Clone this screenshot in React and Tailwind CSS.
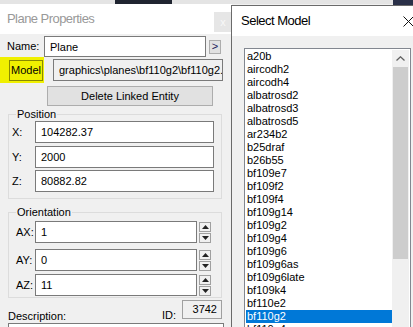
const models = [
  'a20b', 'aircodh2', 'aircodh4', 'albatrosd2', 'albatrosd3', 'albatrosd5', 'ar234b2',
  'b25draf', 'b26b55', 'bf109e7', 'bf109f2', 'bf109f4', 'bf109g14', 'bf109g2', 'bf109g4',
  'bf109g6', 'bf109g6as', 'bf109g6late', 'bf109k4', 'bf110e2', 'bf110g2', 'bf110g4',
]

function Box({ className = '', children }) {
  return (
    <div className={`border border-[#7a7a7a] bg-white pl-[5px] leading-[20px] whitespace-nowrap overflow-hidden ${className}`}>
      {children}
    </div>
  )
}

function Arrow({ down }) {
  return (
    <svg width="7" height="4" viewBox="0 0 7 4">
      <path d={down ? 'M0 0 L7 0 L3.5 4Z' : 'M0 4 L7 4 L3.5 0Z'} fill="#222" />
    </svg>
  )
}

function Spinner() {
  return (
    <div className="ml-[2px] flex flex-col gap-[1px]">
      <div className="w-[12px] h-[10px] border border-[#a0a0a0] bg-[#f0f0f0] flex items-center justify-center">
        <Arrow />
      </div>
      <div className="w-[12px] h-[10px] border border-[#a0a0a0] bg-[#f0f0f0] flex items-center justify-center">
        <Arrow down />
      </div>
    </div>
  )
}

function PlaneProperties() {
  return (
    <div className="w-[232px] flex flex-col">
      {/* title bar */}
      <div className="h-[30px] bg-white flex items-end justify-between">
        <span className="pl-[7px] self-center text-[13px] tracking-[-0.55px] text-[#999999]">Plane Properties</span>
        <div className="w-[18px] h-[20px] mb-[2px] bg-[#e6e6e6] flex items-center justify-center text-[11px] text-[#f8f8f8]">
          x
        </div>
      </div>

      <div className="flex flex-col">
        {/* name */}
        <div className="mt-[2px] h-[21px] flex items-center pl-[7px]">
          <span className="w-[37px]">Name:</span>
          <Box className="w-[162px] h-[21px] leading-[19px]">Plane</Box>
          <div className="ml-[3px] w-[12px] h-[14px] border border-[#adadad] bg-[#e1e1e1] flex items-center justify-center text-[11px] leading-none text-[#1a1a5a]">
            &gt;
          </div>
        </div>

        {/* model */}
        <div className="h-[26px] flex items-center">
          <div className="w-[44px] h-[26px] bg-[#f0f000] flex items-center pl-[9px]">
            <div className="w-[34px] h-[21px] border border-[#8a8a00] pl-[1px] leading-[19px]">Model</div>
          </div>
          <div className="ml-[9px] w-[170px] h-[22px] border border-[#7a7a7a] bg-[#f0f0f0] pl-[5px] leading-[20px] whitespace-nowrap overflow-hidden">
            graphics\planes\bf110g2\bf110g2.x
          </div>
        </div>

        <div className="mt-[3px] ml-[47px] w-[166px] h-[20px] border border-[#adadad] bg-[#e1e1e1] flex items-center justify-center">
          Delete Linked Entity
        </div>

        {/* position */}
        <fieldset className="mt-[2px] mx-[8px] w-[214px] border border-[#dcdcdc] pb-[6px]">
          <legend className="ml-[7px] px-[1px] leading-[13px]">Position</legend>
          <div className="flex items-center pl-[3px] h-[22px]">
            <span className="w-[23px]">X:</span>
            <Box className="w-[179px] h-[22px]">104282.37</Box>
          </div>
          <div className="flex items-center pl-[3px] h-[22px] mt-[3px]">
            <span className="w-[23px]">Y:</span>
            <Box className="w-[179px] h-[22px]">2000</Box>
          </div>
          <div className="flex items-center pl-[3px] h-[22px] mt-[2px]">
            <span className="w-[23px]">Z:</span>
            <Box className="w-[179px] h-[22px]">80882.82</Box>
          </div>
        </fieldset>

        {/* orientation */}
        <fieldset className="mt-[7px] mx-[8px] w-[214px] border border-[#dcdcdc] pb-[1px]">
          <legend className="ml-[7px] px-[1px] leading-[13px]">Orientation</legend>
          <div className="flex items-center pl-[7px] h-[22px] mt-[2px]">
            <span className="w-[19px]">AX:</span>
            <Box className="w-[162px] h-[22px]">1</Box>
            <Spinner />
          </div>
          <div className="flex items-center pl-[7px] h-[22px] mt-[6px]">
            <span className="w-[19px]">AY:</span>
            <Box className="w-[162px] h-[22px]">0</Box>
            <Spinner />
          </div>
          <div className="flex items-center pl-[7px] h-[22px] mt-[3px]">
            <span className="w-[19px]">AZ:</span>
            <Box className="w-[162px] h-[22px]">11</Box>
            <Spinner />
          </div>
        </fieldset>

        {/* description / id */}
        <div className="mt-[2px] h-[23px] flex">
          <span className="pl-[8px] self-end leading-[13px]">Description:</span>
          <span className="ml-auto self-end leading-[13px] mb-[1px]">ID:</span>
          <div className="ml-[6px] mr-[10px] w-[40px] h-[19px] border border-[#a0a0a0] bg-[#f0f0f0] text-right pr-[4px] leading-[17px]">
            3742
          </div>
        </div>
        <div className="mx-[8px] h-[20px] border border-[#7a7a7a] bg-white" />
      </div>
    </div>
  )
}

function SelectModel() {
  return (
    <div className="absolute left-[231px] top-[5px] w-[190px] h-[340px] border-l border-t border-[#6a6a6a] bg-[#f0f0f0]">
      <div className="h-[30px] bg-white flex items-center pl-[9px]">
        <span className="w-[162px] text-[13px] tracking-[-0.5px] text-black">Select Model</span>
        <svg width="11" height="11" viewBox="0 0 11 11">
          <path d="M0.5 0.5 L10.5 10.5 M10.5 0.5 L0.5 10.5" stroke="#111" strokeWidth="1" />
        </svg>
      </div>
      <div className="pl-[12px] pt-[12px]">
        <div className="w-[167px] h-[290px] border border-[#828790] bg-white p-[1px] flex">
          <div className="flex-1 flex flex-col">
            {models.map((m) => (
              <div
                key={m}
                className={`h-[13px] leading-[13px] pl-[1px] ${m === 'bf110g2' ? 'bg-[#0078d7] text-white' : 'text-black'}`}
              >
                {m}
              </div>
            ))}
          </div>
          <div className="w-[17px] bg-[#f0f0f0] flex flex-col">
            <div className="h-[17px] flex items-center justify-center">
              <svg width="9" height="5" viewBox="0 0 9 5">
                <path d="M0.5 4.5 L4.5 0.8 L8.5 4.5" fill="none" stroke="#606060" strokeWidth="1.3" />
              </svg>
            </div>
            <div className="mx-[1px] h-[192px] bg-[#cdcdcd]" />
          </div>
        </div>
      </div>
    </div>
  )
}

export default function App() {
  return (
    <div className="relative w-[413px] h-[327px] overflow-hidden bg-[#f0f0f0] font-['Liberation_Sans',Arial,sans-serif] text-[11px] text-black">
      <div className="h-[4px] flex bg-[#e4e4e4]">
        <div className="ml-[115px] w-[57px] bg-[#1f2430]" />
        <div className="ml-auto w-[20px] h-[5px] bg-[#2a3048]" />
      </div>
      <PlaneProperties />
      <SelectModel />
    </div>
  )
}
